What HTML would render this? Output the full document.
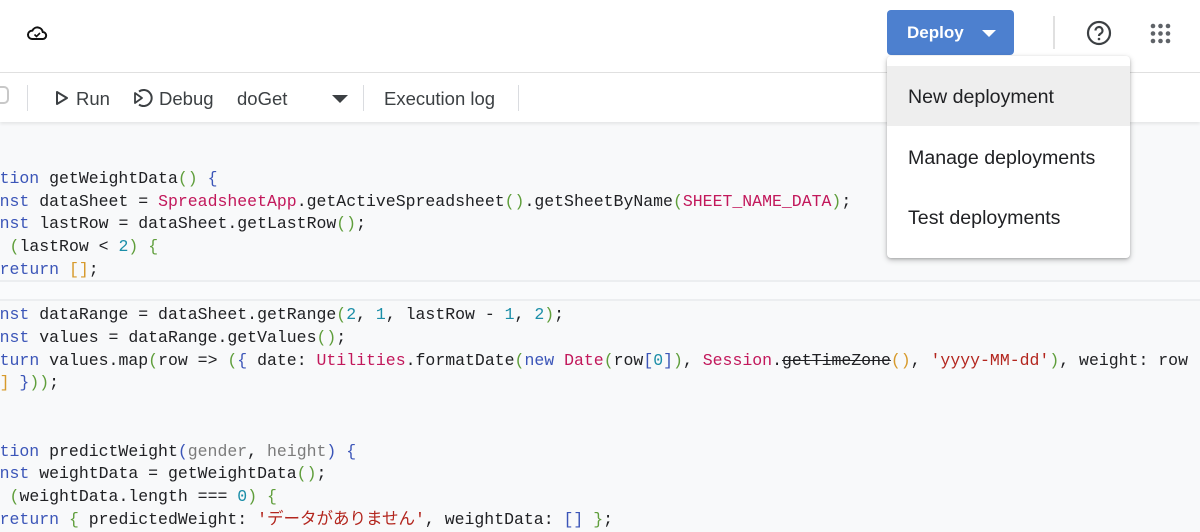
<!DOCTYPE html>
<html><head><meta charset="utf-8"><style>
*{margin:0;padding:0;box-sizing:border-box}
body{width:1200px;height:516px;overflow:hidden;background:#f8f9fa;position:relative;font-family:"Liberation Sans",Arial,sans-serif}
#hdr{position:absolute;left:0;top:0;width:1200px;height:73px;background:#fff;border-bottom:1px solid #e0e0e0}
#tb{position:absolute;left:0;top:73px;width:1200px;height:49px;background:#fff;box-shadow:0 2px 3px rgba(0,0,0,.08);color:#3c4043;font-size:18.5px}
.t{position:absolute;top:15px}
.sep{position:absolute;top:12px;width:1px;height:26px;background:#dadce0}
#code{position:absolute;left:-40px;top:168px;font-family:"Liberation Mono","Noto Sans CJK JP",monospace;font-size:16.5px;line-height:22.72px;color:#202124;white-space:pre}
.k{color:#3b55b8}.p{color:#c2185b}.g{color:#5f9e3b}.o{color:#d79a2b}.n{color:#1b8ea8}.s{color:#b3261e}.a{color:#7b7b7b}
#band{position:absolute;left:0;top:280px;width:1200px;height:21px;background:#fafbfc;border-top:2px solid #eceef0;border-bottom:2px solid #eceef0}
#btn{position:absolute;left:887px;top:10px;width:127px;height:45px;background:#4d80cf;border-radius:4px;color:#fff;font-weight:bold;font-size:17px}
#menu{position:absolute;left:887px;top:56px;width:243px;height:202px;background:#fff;border-radius:4px;box-shadow:0 2px 6px rgba(0,0,0,.25),0 1px 2px rgba(0,0,0,.15);font-size:19.6px;color:#202124}
.mi{position:absolute;left:21px}
</style></head><body>
<div id="band"></div>
<div id="code"><span class="k">function</span> getWeightData<span class="g">()</span> <span class="k">{</span>
  <span class="k">const</span> dataSheet = <span class="p">SpreadsheetApp</span>.getActiveSpreadsheet<span class="g">()</span>.getSheetByName<span class="g">(</span><span class="p">SHEET_NAME_DATA</span><span class="g">)</span>;
  <span class="k">const</span> lastRow = dataSheet.getLastRow<span class="g">()</span>;
  <span class="k">if</span> <span class="g">(</span>lastRow &lt; <span class="n">2</span><span class="g">)</span> <span class="g">{</span>
    <span class="k">return</span> <span class="o">[]</span>;

  <span class="k">const</span> dataRange = dataSheet.getRange<span class="g">(</span><span class="n">2</span>, <span class="n">1</span>, lastRow - <span class="n">1</span>, <span class="n">2</span><span class="g">)</span>;
  <span class="k">const</span> values = dataRange.getValues<span class="g">()</span>;
  <span class="k">return</span> values.map<span class="g">(</span>row =&gt; <span class="g">(</span><span class="k">{</span> date: <span class="p">Utilities</span>.formatDate<span class="g">(</span><span class="k">new</span> <span class="p">Date</span><span class="g">(</span>row<span class="k">[</span><span class="n">0</span><span class="k">]</span><span class="g">)</span>, <span class="p">Session</span>.<s>getTimeZone</s><span class="o">()</span>, <span class="s">'yyyy-MM-dd'</span><span class="g">)</span>, weight: row
    <span class="o">]</span> <span class="k">}</span><span class="g">))</span>;


<span class="k">function</span> predictWeight<span class="k">(</span><span class="a">gender</span>, <span class="a">height</span><span class="k">)</span> <span class="k">{</span>
  <span class="k">const</span> weightData = getWeightData<span class="g">()</span>;
  <span class="k">if</span> <span class="g">(</span>weightData.length === <span class="n">0</span><span class="g">)</span> <span class="g">{</span>
    <span class="k">return</span> <span class="g">{</span> predictedWeight: <span class="s">'データがありません'</span>, weightData: <span class="k">[]</span> <span class="g">}</span>;</div>
<div id="hdr">
<svg style="position:absolute;left:26px;top:23px" width="22" height="20" viewBox="0 0 22 20"><path d="M6 16h10.5a3.5 3.5 0 0 0 .3-7A5.5 5.5 0 0 0 6.4 7.6 4.2 4.2 0 0 0 6 16z" fill="none" stroke="#111" stroke-width="2"/><path d="M8.5 11.5l2 2 3.5-3.5" fill="none" stroke="#111" stroke-width="1.6"/></svg>
<div id="btn"><span style="position:absolute;left:20px;top:13px">Deploy</span><svg style="position:absolute;left:95px;top:20px" width="14" height="8"><path d="M0 0h14L7 7z" fill="#fff"/></svg></div>
<div style="position:absolute;left:1053px;top:16px;width:2px;height:33px;background:#e0e0e0"></div>
<svg style="position:absolute;left:1086px;top:20px" width="26" height="26" viewBox="0 0 26 26"><circle cx="13" cy="13" r="11" fill="none" stroke="#3c4043" stroke-width="2.2"/><path d="M9.5 10.5a3.5 3.5 0 1 1 5 3.2c-1 .5-1.5 1.2-1.5 2.3" fill="none" stroke="#3c4043" stroke-width="2.2"/><circle cx="13" cy="19" r="1.3" fill="#3c4043"/></svg>
<svg style="position:absolute;left:1150px;top:23px" width="21" height="21"><g fill="#5f6368"><circle cx="3" cy="3" r="2.3"/><circle cx="10.5" cy="3" r="2.3"/><circle cx="18" cy="3" r="2.3"/><circle cx="3" cy="10.5" r="2.3"/><circle cx="10.5" cy="10.5" r="2.3"/><circle cx="18" cy="10.5" r="2.3"/><circle cx="3" cy="18" r="2.3"/><circle cx="10.5" cy="18" r="2.3"/><circle cx="18" cy="18" r="2.3"/></g></svg>
</div>
<div id="tb">
<svg style="position:absolute;left:0;top:12px" width="12" height="24"><rect x="-6" y="2" width="14" height="16" rx="4" fill="none" stroke="#c8c8c8" stroke-width="2"/></svg>
<div class="sep" style="left:27px"></div>
<svg style="position:absolute;left:55px;top:17px" width="14" height="16"><path d="M2 2l10 6-10 6z" fill="none" stroke="#3c4043" stroke-width="2" stroke-linejoin="round"/></svg>
<span class="t" style="left:76px">Run</span>
<svg style="position:absolute;left:132px;top:15px" width="22" height="20" viewBox="0 0 22 20"><path d="M7 3.5A8 8 0 1 1 7 16.5" fill="none" stroke="#3c4043" stroke-width="2"/><path d="M3 5l7 5-7 5z" fill="none" stroke="#3c4043" stroke-width="1.8" stroke-linejoin="round"/></svg>
<span class="t" style="left:159px">Debug</span>
<span class="t" style="left:237px">doGet</span>
<svg style="position:absolute;left:332px;top:22px" width="16" height="9"><path d="M0 0h16L8 8z" fill="#3c4043"/></svg>
<div class="sep" style="left:363px"></div>
<span class="t" style="left:384px">Execution log</span>
<div class="sep" style="left:518px"></div>
</div>
<div id="menu">
<div style="position:absolute;left:0;top:10px;width:243px;height:60px;background:#eeeeee"></div>
<span class="mi" style="top:30px">New deployment</span>
<span class="mi" style="top:91px">Manage deployments</span>
<span class="mi" style="top:151px">Test deployments</span>
</div>
</body></html>
